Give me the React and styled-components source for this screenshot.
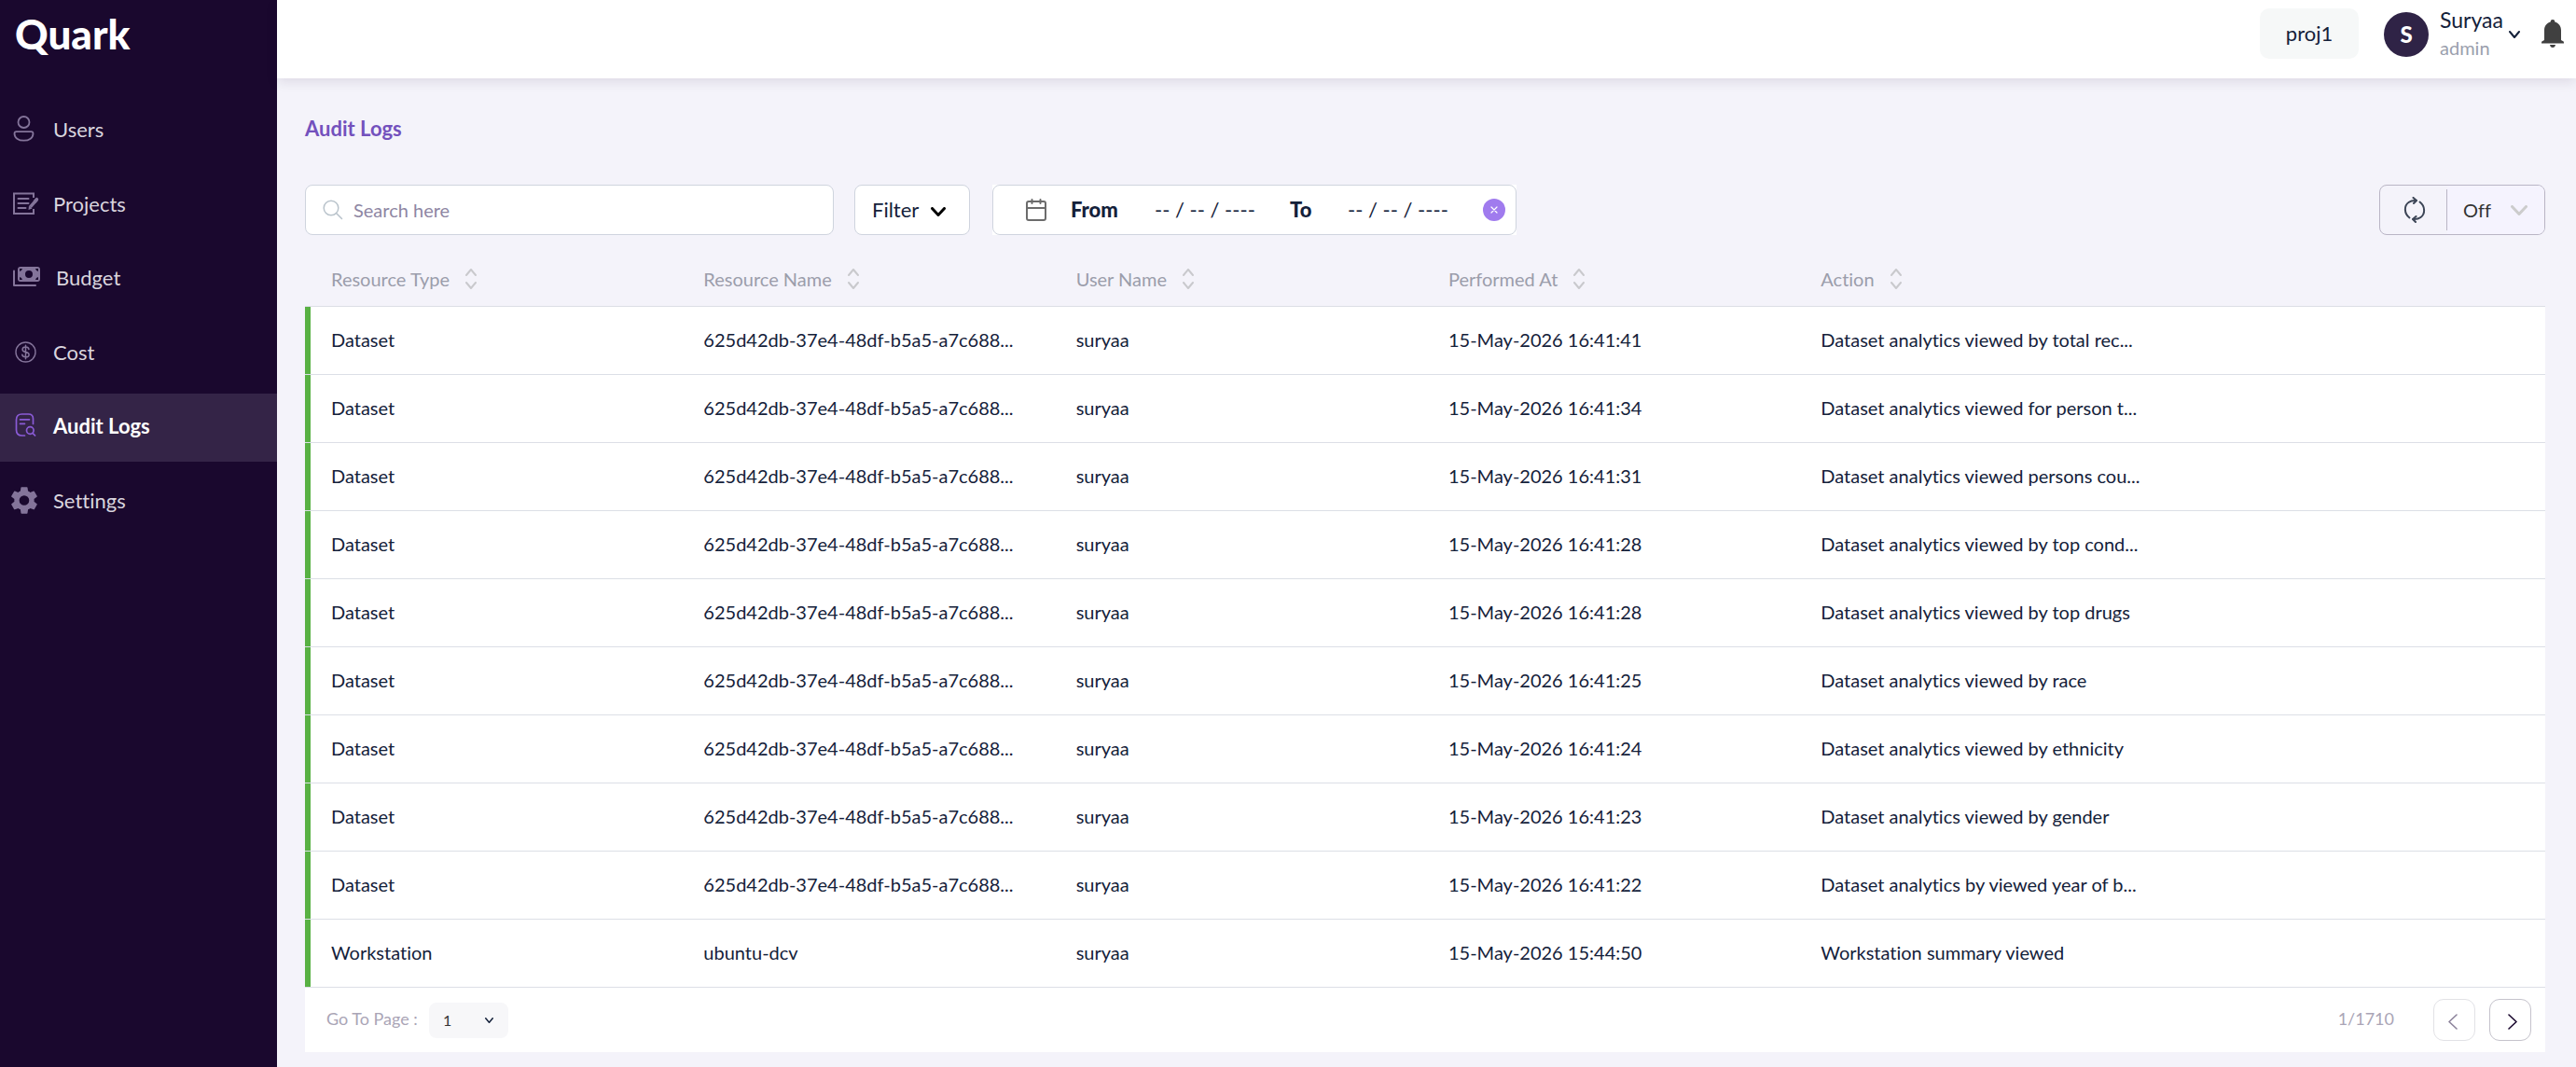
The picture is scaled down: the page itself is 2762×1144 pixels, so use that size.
import React from "react";
import styled, { createGlobalStyle } from "styled-components";

const GlobalStyle = createGlobalStyle`
  *, *::before, *::after { box-sizing: border-box; }
  body {
    margin: 0;
    background: #f4f3fa;
    color: #14213a;
    font-family: Lato, "Noto Sans", sans-serif;
    font-size: 20px;
    font-variant-ligatures: none;
    line-height: 24px;
  }
  button, input, select { font: inherit; color: inherit; margin: 0; }
  button, select { cursor: pointer; }
`;

const Shell = styled.div`
  display: flex;
  min-height: 100vh;
`;

/* ---------- Sidebar ---------- */

const Sidebar = styled.aside`
  flex: 0 0 297px;
  background: #1a082e;
`;

const Logo = styled.div`
  height: 104px;
  padding: 12px 16px;
  color: #fff;
  font-size: 44px;
  font-weight: 900;
  line-height: 48px;
`;

const Nav = styled.nav`
  display: flex;
  flex-direction: column;
  justify-content: space-between;
  height: 471px;
`;

const NavLink = styled.a`
  display: flex;
  align-items: center;
  height: 73px;
  padding: 0 0 3px 12px;
  gap: ${(p) => (p.$wide ? 16 : 13)}px;
  color: ${(p) => (p.$active ? "#fff" : "#d9d5de")};
  background: ${(p) => (p.$active ? "#342447" : "transparent")};
  font-size: 22px;
  font-weight: ${(p) => (p.$active ? 700 : 400)};
  text-decoration: none;

  svg {
    flex: none;
    color: ${(p) => (p.$active ? "#8a5bd6" : "#84749a")};
  }
`;

/* ---------- Header ---------- */

const Page = styled.div`
  flex: 1;
  min-width: 0;
`;

const Header = styled.header`
  display: flex;
  align-items: flex-start;
  justify-content: flex-end;
  height: 84px;
  padding: 9px 13px 0 0;
  background: #fff;
  box-shadow: 0 4px 12px rgba(26, 8, 46, 0.1);
`;

const ProjectButton = styled.button`
  height: 54px;
  width: 106px;
  margin-right: 27px;
  border: 0;
  border-radius: 10px;
  background: #f6f8f8;
  font-size: 22px;
`;

const Account = styled.button`
  display: flex;
  align-items: center;
  height: 56px;
  padding: 0;
  border: 0;
  background: none;
  text-align: left;
  margin-right: 23px;
`;

const Avatar = styled.span`
  display: grid;
  place-items: center;
  width: 48px;
  height: 48px;
  margin-right: 12px;
  border-radius: 50%;
  background: #2f2346;
  color: #fff;
  font-size: 24px;
  font-weight: 900;
`;

const Names = styled.span`
  display: flex;
  flex-direction: column;
  width: 74px;
  height: 60px;
`;

const UserName = styled.span`
  font-size: 23px;
  line-height: 28px;
`;

const Role = styled.span`
  color: #9ba0ad;
  line-height: 32px;
`;

const BellButton = styled.button`
  display: flex;
  margin-top: 12px;
  padding: 0;
  border: 0;
  background: none;
  color: #404040;
`;

/* ---------- Content ---------- */

const Main = styled.main`
  padding: 40px 33px 8px 30px;
`;

const Title = styled.h1`
  margin: 0;
  color: #7351bd;
  font-size: 22px;
  font-weight: 700;
  line-height: 28px;
`;

const Toolbar = styled.div`
  display: flex;
  margin-top: 46px;
`;

const SearchBox = styled.label`
  display: flex;
  align-items: center;
  width: 567px;
  height: 54px;
  padding-left: 18px;
  gap: 11px;
  border: 1px solid #cfd4de;
  border-radius: 8px;
  background: #fff;
  color: #b9c3cb;
`;

const SearchInput = styled.input`
  flex: 1;
  min-width: 0;
  padding: 0;
  border: 0;
  outline: 0;
  background: none;
  color: #14213a;

  &::placeholder { color: #8e86a3; opacity: 1; }
`;

const FilterButton = styled.button`
  display: flex;
  align-items: center;
  justify-content: space-between;
  width: 124px;
  height: 54px;
  margin: 0 24px 0 22px;
  padding: 0 25px 0 18px;
  border: 1px solid #cfd4de;
  border-radius: 8px;
  background: #fff;
  font-size: 22px;

  svg { color: #000; margin-top: 4px; }
`;

const DateRangeFrame = styled.div`
  background: #fff;
`;

const DateRange = styled.div`
  display: flex;
  align-items: center;
  width: 562px;
  height: 54px;
  padding: 0 9px 0 35px;
  border: 1px solid #cfd4de;
  border-radius: 8px;
`;

const DateLabel = styled.label`
  width: ${(p) => p.$width}px;
  margin-left: ${(p) => p.$indent}px;
  font-size: 22px;
  font-weight: 900;
`;

const DateInput = styled.input`
  width: ${(p) => p.$width}px;
  padding: 0;
  border: 0;
  outline: 0;
  background: none;
  font-size: 22px;

  &::placeholder { color: #14213a; opacity: 1; }
`;

const ClearButton = styled.button`
  display: grid;
  place-items: center;
  width: 24px;
  height: 24px;
  padding: 0;
  border: 0;
  border-radius: 50%;
  background: #a07bee;
  color: #fff;
`;

const RefreshGroup = styled.div`
  display: flex;
  align-items: center;
  width: 178px;
  height: 54px;
  margin-left: auto;
  border: 1px solid #b9b5c5;
  border-radius: 8px;
  overflow: hidden;
`;

const RefreshButton = styled.button`
  display: grid;
  place-items: center;
  width: 72px;
  height: 44px;
  padding: 0 0 0 3px;
  border: 0;
  border-right: 1px solid #b9b5c5;
  background: none;
  color: #3d4657;
`;

const SelectWrap = styled.span`
  display: grid;
  align-items: center;

  select, svg { grid-area: 1 / 1; }
  svg { justify-self: end; pointer-events: none; }
`;

const IntervalWrap = styled(SelectWrap)`
  flex: 1;
  height: 100%;
  background: #f5f3fe;
  svg { margin-right: 18px; color: #cccccc; }
`;

const IntervalSelect = styled.select`
  appearance: none;
  height: 100%;
  padding: 0 0 0 17px;
  border: 0;
  background: none;
  color: #333;
`;

/* ---------- Table ---------- */

const Table = styled.table`
  width: 100%;
  margin-top: 20px;
  table-layout: fixed;
  border-collapse: separate;
  border-spacing: 0;
`;

const MarkerCol = styled.col`
  width: 6px;
`;

const HeadCell = styled.th`
  height: 57px;
  padding: 0 0 2px 22px;
  border-bottom: 1px solid #dcdfe6;
  text-align: left;
  font-weight: 400;
`;

const MarkerHead = styled(HeadCell)`
  padding: 0;
`;

const SortButton = styled.button`
  display: flex;
  align-items: center;
  gap: 17px;
  padding: 0;
  border: 0;
  background: none;
  color: #9b9dab;

  svg { color: #c9c9cd; }
`;

const Cell = styled.td`
  height: 73px;
  padding: 0 0 3px 22px;
  border-bottom: 1px solid #dcdfe6;
  background: #fff;
  white-space: nowrap;
`;

const Marker = styled(Cell)`
  padding: 0;
  background: #58b143 padding-box;
`;

const Footer = styled.footer`
  display: flex;
  align-items: center;
  height: 69px;
  padding: 0 15px 0 23px;
  background: #fff;
  color: #aaa5b6;
`;

const PageLabel = styled.label`
  width: 110px;
  padding-bottom: 3px;
  font-size: 18px;
`;

const PageWrap = styled(SelectWrap)`
  width: 85px;
  height: 38px;
  border-radius: 8px;
  background: #f7f7f9;
  svg { margin-right: 16px; color: #14213a; }
`;

const PageSelect = styled.select`
  appearance: none;
  width: 100%;
  height: 100%;
  padding: 0 0 0 15px;
  border: 0;
  background: none;
  color: #333;
  font-size: 16px;
`;

const PageCount = styled.span`
  margin-left: auto;
  margin-right: 42px;
  padding-bottom: 3px;
  font-size: 18px;
`;

const PageButton = styled.button`
  display: grid;
  place-items: center;
  width: 45px;
  height: 45px;
  padding: 4px 4px 0 0;
  border: 1px solid ${(p) => (p.disabled ? "#e2e2e6" : "#c5c3cc")};
  border-radius: 11px;
  background: #fff;
  color: ${(p) => (p.disabled ? "#8c839b" : "#1a082e")};
  & + & { margin-left: 15px; padding: 4px 0 0 4px; }
`;

/* ---------- Icons ---------- */

const Chevron = ({ w, h, stroke = 2 }) => (
  <svg width={w} height={h} viewBox={`0 0 ${w} ${h}`} fill="none" stroke="currentColor" strokeWidth={stroke} strokeLinecap="round" strokeLinejoin="round" aria-hidden="true">
    <path d={`M${stroke / 2} ${stroke / 2}L${w / 2} ${h - stroke / 2}L${w - stroke / 2} ${stroke / 2}`} />
  </svg>
);

const NavIcon = ({ width = 32, children }) => (
  <svg width={width} height="32" viewBox={`0 0 ${width} 32`} fill="none" stroke="currentColor" strokeWidth="1.8" strokeLinecap="round" strokeLinejoin="round" aria-hidden="true">
    {children}
  </svg>
);

const UsersIcon = () => (
  <NavIcon>
    <circle cx="13.500" cy="8" r="6" />
    <path d="M5.500 18.200h16q2 0 2 2c0 4.600-4.200 7.500-10 7.500s-10-2.900-10-7.500q0-2 2-2Z" />
  </NavIcon>
);

const ProjectsIcon = () => (
  <NavIcon>
    <g strokeLinecap="butt" strokeLinejoin="miter" strokeWidth="2">
      <path d="M24 9V4.500H3v21.500h21v-5" />
      <path d="M7.500 10h11M7.500 15h11M7.500 20h8" strokeLinecap="round" />
    </g>
    <path d="M26.500 9.500l2.500 2.300-7.200 8.200-2.600-2.300Z" fill="currentColor" stroke="none" />
    <path d="M19 17.500l3.500 3-4 1.500Z" fill="currentColor" stroke="none" />
    <path d="M25.500 13l2-2.300" strokeWidth="3.500" />
  </NavIcon>
);

const BudgetIcon = () => (
  <NavIcon>
    <path d="M3 8.500V24h23" strokeWidth="2" />
    <path
      fill="currentColor"
      stroke="none"
      fillRule="evenodd"
      d="M10 4h18a3 3 0 0 1 3 3v10a3 3 0 0 1-3 3H10a3 3 0 0 1-3-3V7a3 3 0 0 1 3-3Zm9 4a4 4 0 1 0 0 8 4 4 0 0 0 0-8ZM9 6v3q2.500-.500 3-3Zm20 0h-3q.500 2.500 3 3ZM9 18h3q-.500-2.500-3-3Zm20 0v-3q-2.500.500-3 3Z"
    />
  </NavIcon>
);

const CostIcon = () => (
  <NavIcon>
    <circle cx="15.500" cy="15.500" r="10.500" strokeWidth="1.400" />
    <path d="M19 12.500c-.300-1.600-1.700-2.400-3.500-2.400s-3.400.900-3.400 2.600c0 3.800 7 1.900 7 5.500 0 1.700-1.700 2.600-3.600 2.600s-3.500-.900-3.700-2.600M15.500 8.300v14.400" strokeWidth="1.500" />
  </NavIcon>
);

const AuditIcon = () => (
  <NavIcon>
    <g strokeWidth="1.700">
      <path d="M23.500 13.500V8q0-5-5-5h-7q-6 0-6 6v11q0 6 6 6h3" />
      <path d="M9.500 8.800h10M9.500 13.300h5" />
      <circle cx="20.300" cy="20.500" r="3.800" />
      <path d="M23 23.300l2.600 2.700" />
    </g>
  </NavIcon>
);

const SettingsIcon = () => (
  <NavIcon>
    <path
      transform="translate(-3.800 -2.300) scale(1.480)"
      fill="currentColor"
      stroke="none"
      d="M19.140 12.940c.04-.3.060-.610.060-.940s-.020-.640-.070-.940l2.030-1.580a.490.490 0 0 0 .120-.610l-1.920-3.320a.490.490 0 0 0-.590-.220l-2.390.960a7 7 0 0 0-1.620-.940l-.360-2.540a.480.480 0 0 0-.480-.410h-3.840a.470.470 0 0 0-.470.410l-.360 2.540a7.400 7.400 0 0 0-1.620.940l-2.390-.960a.480.480 0 0 0-.590.220L2.740 8.870a.470.470 0 0 0 .120.610l2.030 1.580a6 6 0 0 0 0 1.880l-2.030 1.580a.490.490 0 0 0-.120.610l1.920 3.320c.120.220.370.290.590.220l2.390-.960c.5.380 1.030.7 1.620.940l.360 2.540c.050.240.240.410.480.410h3.840c.240 0 .440-.170.470-.410l.360-2.540a7 7 0 0 0 1.620-.940l2.390.960c.220.080.470 0 .590-.220l1.920-3.320a.470.470 0 0 0-.120-.610ZM12 15.600A3.600 3.600 0 1 1 12 8.400a3.600 3.600 0 0 1 0 7.200Z"
    />
  </NavIcon>
);

const BellIcon = () => (
  <svg width="24" height="31" viewBox="0 0 24 31" fill="currentColor" aria-hidden="true">
    <path d="M12 0a2.300 2.300 0 0 0-2.300 2.500C5.500 3.700 3 7 3 11.500V22L.300 23.500Q0 24 0 25.500h24q0-1.500-.300-2L21 22V11.500c0-4.500-2.500-7.800-6.700-9A2.300 2.300 0 0 0 12 0ZM9 27h6q-.500 3-3 3t-3-3Z" />
  </svg>
);

const SearchIcon = () => (
  <svg width="22" height="22" viewBox="0 0 22 22" fill="none" stroke="currentColor" strokeWidth="1.500" strokeLinecap="round" aria-hidden="true">
    <circle cx="9" cy="9" r="7.800" />
    <path d="M14.500 14.500l6 6" />
  </svg>
);

const CalendarIcon = () => (
  <svg width="22" height="24" viewBox="0 0 22 24" fill="none" stroke="#6c6c6c" strokeWidth="2" strokeLinecap="round" strokeLinejoin="round" aria-hidden="true">
    <rect x="1" y="3" width="20" height="20" rx="2" />
    <path d="M1 10h20M6.500 1v4M15.500 1v4" />
  </svg>
);

const CloseIcon = () => (
  <svg width="8" height="8" viewBox="0 0 8 8" fill="none" stroke="currentColor" strokeWidth="1.200" strokeLinecap="round" aria-hidden="true">
    <path d="M1 1l6 6M7 1L1 7" />
  </svg>
);

const RefreshIcon = () => (
  <svg width="24" height="28" viewBox="0 0 24 28" fill="none" stroke="currentColor" strokeWidth="2" strokeLinecap="round" strokeLinejoin="round" aria-hidden="true">
    <path d="M6.500 22.500C.500 18 .500 9.500 5.500 6q3-2.300 8-2" />
    <path d="M17.500 5.500c6 4.500 6 13 1 16.500q-3 2.300-8 2" />
    <path d="M10.500 1l3.500 3-3 3M13.500 21l-3.500 3 3 3" />
  </svg>
);

const SortIcon = () => (
  <svg width="12" height="22" viewBox="0 0 12 22" fill="none" stroke="currentColor" strokeWidth="2" strokeLinecap="round" strokeLinejoin="round" aria-hidden="true">
    <path d="M1 7l5-6 5 6M1 15l5 6 5-6" />
  </svg>
);

const AngleIcon = ({ flip }) => (
  <svg width="10" height="17" viewBox="0 0 10 17" fill="none" stroke="currentColor" strokeWidth="1.600" strokeLinecap="round" strokeLinejoin="round" aria-hidden="true">
    <path d={flip ? "M9 1L1 8.500l8 7.500" : "M1 1l8 7.500L1 16"} />
  </svg>
);

/* ---------- Data ---------- */

const navItems = [
  { label: "Users", Icon: UsersIcon },
  { label: "Projects", Icon: ProjectsIcon },
  { label: "Budget", Icon: BudgetIcon, wide: true },
  { label: "Cost", Icon: CostIcon },
  { label: "Audit Logs", Icon: AuditIcon, active: true },
  { label: "Settings", Icon: SettingsIcon },
];

const columns = ["Resource Type", "Resource Name", "User Name", "Performed At", "Action"];

const datasetId = "625d42db-37e4-48df-b5a5-a7c688...";

const logs = [
  ["Dataset", datasetId, "suryaa", "15-May-2026 16:41:41", "Dataset analytics viewed by total rec..."],
  ["Dataset", datasetId, "suryaa", "15-May-2026 16:41:34", "Dataset analytics viewed for person t..."],
  ["Dataset", datasetId, "suryaa", "15-May-2026 16:41:31", "Dataset analytics viewed persons cou..."],
  ["Dataset", datasetId, "suryaa", "15-May-2026 16:41:28", "Dataset analytics viewed by top cond..."],
  ["Dataset", datasetId, "suryaa", "15-May-2026 16:41:28", "Dataset analytics viewed by top drugs"],
  ["Dataset", datasetId, "suryaa", "15-May-2026 16:41:25", "Dataset analytics viewed by race"],
  ["Dataset", datasetId, "suryaa", "15-May-2026 16:41:24", "Dataset analytics viewed by ethnicity"],
  ["Dataset", datasetId, "suryaa", "15-May-2026 16:41:23", "Dataset analytics viewed by gender"],
  ["Dataset", datasetId, "suryaa", "15-May-2026 16:41:22", "Dataset analytics by viewed year of b..."],
  ["Workstation", "ubuntu-dcv", "suryaa", "15-May-2026 15:44:50", "Workstation summary viewed"],
];

export default function App() {
  return (
    <Shell>
      <GlobalStyle />
      <Sidebar>
        <Logo>Quark</Logo>
        <Nav>
          {navItems.map(({ label, Icon, active, wide }) => (
            <NavLink key={label} href="#" $active={active} $wide={wide}>
              <Icon />
              {label}
            </NavLink>
          ))}
        </Nav>
      </Sidebar>
      <Page>
        <Header>
          <ProjectButton>proj1</ProjectButton>
          <Account>
            <Avatar>S</Avatar>
            <Names>
              <UserName>Suryaa</UserName>
              <Role>admin</Role>
            </Names>
            <Chevron w={12} h={8} />
          </Account>
          <BellButton aria-label="Notifications">
            <BellIcon />
          </BellButton>
        </Header>
        <Main>
          <Title>Audit Logs</Title>
          <Toolbar>
            <SearchBox>
              <SearchIcon />
              <SearchInput type="text" placeholder="Search here" aria-label="Search here" />
            </SearchBox>
            <FilterButton>
              Filter
              <Chevron w={16} h={10} stroke={3} />
            </FilterButton>
            <DateRangeFrame>
              <DateRange>
                <CalendarIcon />
                <DateLabel htmlFor="from" $width={90} $indent={26}>From</DateLabel>
                <DateInput id="from" $width={145} placeholder="-- / -- / ----" />
                <DateLabel htmlFor="to" $width={62} $indent={0}>To</DateLabel>
                <DateInput id="to" $width={145} placeholder="-- / -- / ----" />
                <ClearButton aria-label="Clear dates">
                  <CloseIcon />
                </ClearButton>
              </DateRange>
            </DateRangeFrame>
            <RefreshGroup>
              <RefreshButton aria-label="Refresh">
                <RefreshIcon />
              </RefreshButton>
              <IntervalWrap>
                <IntervalSelect aria-label="Auto refresh" defaultValue="Off">
                  <option>Off</option>
                </IntervalSelect>
                <Chevron w={18} h={11} stroke={3} />
              </IntervalWrap>
            </RefreshGroup>
          </Toolbar>
          <Table>
            <colgroup>
              <MarkerCol />
              <col span={6} />
            </colgroup>
            <thead>
              <tr>
                <MarkerHead />
                {columns.map((name) => (
                  <HeadCell key={name} scope="col">
                    <SortButton>
                      {name}
                      <SortIcon />
                    </SortButton>
                  </HeadCell>
                ))}
                <HeadCell />
              </tr>
            </thead>
            <tbody>
              {logs.map((row, i) => (
                <tr key={i}>
                  <Marker />
                  {row.map((value, j) => (
                    <Cell key={j}>{value}</Cell>
                  ))}
                  <Cell />
                </tr>
              ))}
            </tbody>
          </Table>
          <Footer>
            <PageLabel htmlFor="page">Go To Page :</PageLabel>
            <PageWrap>
              <PageSelect id="page" defaultValue="1">
                <option>1</option>
              </PageSelect>
              <Chevron w={9} h={6} stroke={1.5} />
            </PageWrap>
            <PageCount>1/1710</PageCount>
            <PageButton disabled aria-label="Previous page">
              <AngleIcon flip />
            </PageButton>
            <PageButton aria-label="Next page">
              <AngleIcon />
            </PageButton>
          </Footer>
        </Main>
      </Page>
    </Shell>
  );
}
